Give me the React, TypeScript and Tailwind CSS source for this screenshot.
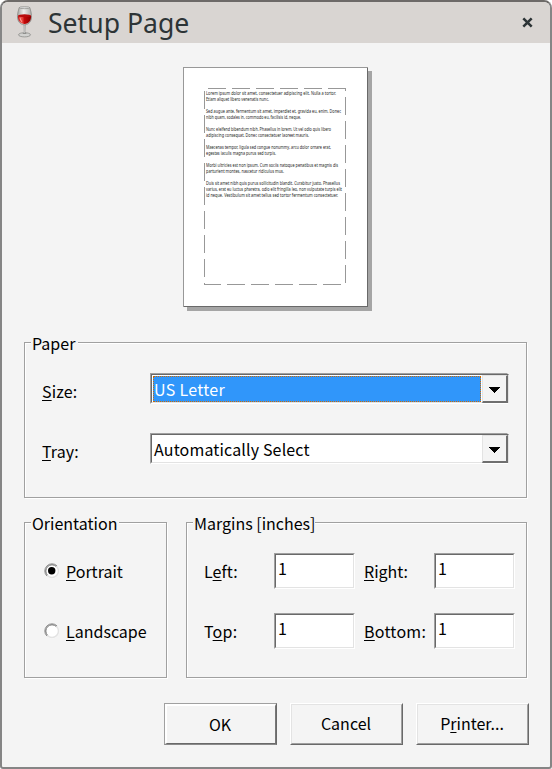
import React from "react";

const lines: [string, number, number][] = [
  ["Lorem ipsum dolor sit amet, consectetuer adipiscing elit. Nulla a tortor.", 95, 130],
  ["Etiam aliquet libero venenatis nunc.", 101, 63],
  ["Sed augue ante, fermentum sit amet, imperdiet et, gravida eu, enim. Donec", 113, 135],
  ["nibh quam, sodales in, commodo eu, facilisis id, neque.", 119, 95],
  ["Nunc eleifend bibendum nibh. Phasellus in lorem. Ut vel odio quis libero", 131, 125],
  ["adipiscing consequat. Donec consectetuer laoreet mauris.", 137, 103],
  ["Maecenas tempor, ligula sed congue nonummy, arcu dolor ornare erat,", 149, 125],
  ["egestas iaculis magna purus sed turpis.", 155, 70],
  ["Morbi ultricies est non ipsum. Cum sociis natoque penatibus et magnis dis", 167, 132],
  ["parturient montes, nascetur ridiculus mus.", 173, 78],
  ["Duis sit amet nibh quis purus sollicitudin blandit. Curabitur justo. Phasellus", 185, 134],
  ["varius, erat eu luctus pharetra, odio elit fringilla leo, non vulputate turpis elit", 191, 136],
  ["id neque. Vestibulum sit amet tellus sed tortor fermentum consectetuer.", 197, 132],
];

function PagePreview() {
  return (
    <svg width="189" height="244" viewBox="183 67 189 244" className="block overflow-visible">
      <rect x="187" y="71" width="185" height="240" fill="#a5a5a5" />
      <rect x="183" y="67" width="185" height="240" fill="#696969" />
      <path d="M183 307V67h185v1H184v239z" fill="#989898" />
      <rect x="184" y="68" width="183" height="238" fill="#fff" />
      <g stroke="#989898" strokeWidth="1" strokeDasharray="18 6">
        <path d="M208 88.5H346" />
        <path d="M345.5 88V91" />
        <path d="M345.5 97V283" />
        <path d="M341 284.5H204" />
        <path d="M204.5 91V285" />
      </g>
      <g fontSize="4.8" fill="#1c1c1c" fontFamily="'Noto Sans', sans-serif">
        {lines.map(([text, y, width]) => (
          <text key={y} x="206" y={y} textLength={width} lengthAdjust="spacingAndGlyphs">
            {text}
          </text>
        ))}
      </g>
    </svg>
  );
}

function WineGlass() {
  return (
    <svg width="16" height="32" viewBox="0 0 16 32" className="block">
      <defs>
        <linearGradient id="glass" x1="0" x2="1">
          <stop offset="0" stopColor="#a5a5a2" />
          <stop offset=".45" stopColor="#efefed" />
          <stop offset="1" stopColor="#a9a9a6" />
        </linearGradient>
        <linearGradient id="wine" x1="0" x2="1">
          <stop offset="0" stopColor="#c21a1a" />
          <stop offset=".3" stopColor="#ee5048" />
          <stop offset=".5" stopColor="#c40808" />
          <stop offset="1" stopColor="#8e0000" />
        </linearGradient>
      </defs>
      <ellipse cx="8.5" cy="28.8" rx="6" ry="2.1" fill="#d2d2d0" stroke="#8d8d8a" strokeWidth=".8" />
      <path d="M7.4 18h2.2l-.3 8 1.4 2H6.4l1.3-2z" fill="#90908d" />
      <path d="M8.2 19v8" stroke="#eee" strokeWidth=".7" />
      <path d="M3.2 1.6C1.2 8 .8 12 2.4 15c1.2 2.4 3.4 3.8 6.1 3.8s4.9-1.4 6.1-3.8c1.6-3 1.2-7-.8-13.4z" fill="url(#glass)" stroke="#8b8b88" strokeWidth=".8" />
      <path d="M1.9 9.8C1.8 14.5 4 18 8.5 18s6.7-3.5 6.6-8.2z" fill="url(#wine)" />
      <ellipse cx="8.5" cy="9.8" rx="6.5" ry="1.5" fill="#b80c0c" />
      <path d="M4 11.5c.2 2 1 3.5 2 4.2" stroke="#ff9a90" strokeWidth="1.2" fill="none" />
      <ellipse cx="8.5" cy="1.7" rx="5.3" ry="1" fill="#dedede" stroke="#8b8b88" strokeWidth=".7" />
    </svg>
  );
}

function U({ children }: { children: string }) {
  return (
    <span className="underline decoration-1 underline-offset-[2px] [text-decoration-skip-ink:none]">
      {children}
    </span>
  );
}

function Group({ title, legendWidth, className, children }: { title: string; legendWidth: string; className: string; children: React.ReactNode }) {
  return (
    <div className={`relative border border-[#a0a0a0] shadow-[1px_1px_0_#fff,inset_1px_1px_0_#fff] ${className}`}>
      <div className={`absolute left-[6px] -top-[12px] h-6 bg-[#f4f4f4] pl-[1px] leading-6 whitespace-nowrap ${legendWidth}`}>{title}</div>
      {children}
    </div>
  );
}

function Combo({ value, selected }: { value: string; selected?: boolean }) {
  return (
    <div className="flex h-[31px] w-[358px] border border-t-[#a0a0a0] border-l-[#a0a0a0] border-r-white border-b-white">
      <div className="flex flex-1 border border-t-[#696969] border-l-[#696969] border-r-[#e3e3e3] border-b-[#e3e3e3] bg-white">
        <div className="flex-1 p-px">
          <div
            className={
              selected
                ? "h-[26px] w-[328px] border border-dotted border-[#cf6a00] bg-[#3096fa] leading-[25px] tracking-[0.3px] text-white"
                : "h-[26px] w-[328px] pl-px leading-[27px] tracking-[0.15px]"
            }
          >
            {value}
          </div>
        </div>
        <div className="flex h-[28px] w-[26px] items-center justify-center border-t border-r-2 border-b-2 border-l border-t-[#e3e3e3] border-l-[#e3e3e3] border-r-[#6f6f6f] border-b-[#6f6f6f] bg-[#f4f4f4]">
          <svg width="11" height="6" viewBox="0 0 11 6" className="mt-[3px]" shapeRendering="crispEdges">
            <path d="M0 0h11L5.5 6z" fill="#000" />
          </svg>
        </div>
      </div>
    </div>
  );
}

function Edit() {
  return (
    <div className="h-[36px] w-[81px] border border-t-[#a0a0a0] border-l-[#a0a0a0] border-r-white border-b-white">
      <div className="h-full border border-t-[#696969] border-l-[#696969] border-r-[#e3e3e3] border-b-[#e3e3e3] bg-white pl-[2px] leading-[26px]">1</div>
    </div>
  );
}

function Radio({ checked }: { checked?: boolean }) {
  return (
    <svg width="16" height="16" viewBox="0 0 16 16" className="block">
      <circle cx="8" cy="8" r="7.5" fill="#fff" />
      <path d="M2.9 13.1A7.2 7.2 0 0 1 13.1 2.9" fill="none" stroke="#909090" strokeWidth="1" />
      <path d="M3.6 12.4A6.2 6.2 0 0 1 12.4 3.6" fill="none" stroke="#696969" strokeWidth="1" />
      <path d="M12.6 3.4A6.5 6.5 0 0 1 3.4 12.6" fill="none" stroke="#e3e3e3" strokeWidth="1.5" />
      {checked && <circle cx="7.7" cy="7.7" r="3.7" fill="#000" />}
    </svg>
  );
}

function Button({ children, primary }: { children: React.ReactNode; primary?: boolean }) {
  return primary ? (
    <div className="h-[42px] w-[113px] border border-[#a0a0a0] border-r-[#696969] border-b-[#8a8a8a]">
      <div className="h-full border-t-2 border-r border-b border-l-2 border-t-white border-l-white border-r-[#777] border-b-[#696969] pr-[2px] text-center leading-[36px]">{children}</div>
    </div>
  ) : (
    <div className="h-[42px] w-[113px] border border-t-white border-l-white border-r-[#696969] border-b-[#696969]">
      <div className="h-full border border-t-[#e3e3e3] border-l-[#e3e3e3] border-r-[#a0a0a0] border-b-[#a0a0a0] pr-px text-center leading-[36px]">{children}</div>
    </div>
  );
}

export default function App() {
  return (
    <div className="h-[769px] w-[552px] bg-white">
      <div className="flex h-[769px] w-[552px] flex-col overflow-hidden rounded-t-[8px] rounded-b-[3px] border-2 border-t-[#6d6a68] border-r-[#858585] border-b-[#858585] border-l-[#858585] bg-[#f4f4f4] font-['Noto_Sans_CJK_SC',sans-serif] text-[16px] text-black">
        <div className="flex h-[41px] shrink-0 items-center bg-[#d9d5d2]">
          <div className="mt-[-1px] ml-[14px]"><WineGlass /></div>
          <div className="ml-[16px] flex-1 pt-[2px] font-['Noto_Sans',sans-serif] text-[26.6px] leading-[41px] text-[#2d3436]">Setup Page</div>
          <svg width="11" height="11" viewBox="0 0 10 10" className="mr-[17px]">
            <path d="M1.2 1.2l7.6 7.6M8.8 1.2L1.2 8.8" stroke="#2d3436" strokeWidth="2.3" />
          </svg>
        </div>
        <div className="flex h-[299px] shrink-0 pt-[24px] pl-[181px]"><PagePreview /></div>
        <div className="pl-[22px]">
          <Group title="Paper" legendWidth="w-[47px]" className="flex h-[156px] w-[503px] flex-col gap-[29px] pt-[30px] pl-[17px]">
            <div className="flex h-[31px]">
              <div className="w-[108px] pt-[4px] leading-[29px] tracking-[0.1px]"><U>S</U>ize:</div>
              <Combo value="US Letter" selected />
            </div>
            <div className="flex h-[31px]">
              <div className="w-[108px] pt-[4px] leading-[29px] tracking-[0.1px]"><U>T</U>ray:</div>
              <Combo value="Automatically Select" />
            </div>
          </Group>
          <div className="mt-[24px] flex gap-[19px]">
            <Group title="Orientation" legendWidth="w-[88px]" className="flex h-[156px] w-[143px] flex-col gap-[30px] pt-[34px] pl-[19px]">
              <div className="flex h-[30px] gap-[6px]">
                <div className="pt-[6px]"><Radio checked /></div>
                <div className="leading-[29px]"><U>P</U>ortrait</div>
              </div>
              <div className="flex h-[30px] gap-[6px]">
                <div className="pt-[6px]"><Radio /></div>
                <div className="leading-[29px]"><U>L</U>andscape</div>
              </div>
            </Group>
            <Group title="Margins [inches]" legendWidth="w-[122px]" className="grid h-[156px] w-[341px] grid-cols-[70px_90px_70px_81px] content-start gap-y-[24px] pt-[30px] pl-[17px]">
              <div className="pt-[4px] leading-[29px] tracking-[0.1px]">L<U>e</U>ft:</div>
              <Edit />
              <div className="pt-[4px] leading-[29px]"><U>R</U>ight:</div>
              <Edit />
              <div className="pt-[4px] leading-[29px] tracking-[0.2px]">T<U>o</U>p:</div>
              <Edit />
              <div className="pt-[4px] leading-[29px] tracking-[0.25px]"><U>B</U>ottom:</div>
              <Edit />
            </Group>
          </div>
        </div>
        <div className="mt-[25px] ml-[162px] flex gap-[13px]">
          <Button primary>OK</Button>
          <Button>Cancel</Button>
          <Button>P<U>r</U>inter...</Button>
        </div>
      </div>
    </div>
  );
}
